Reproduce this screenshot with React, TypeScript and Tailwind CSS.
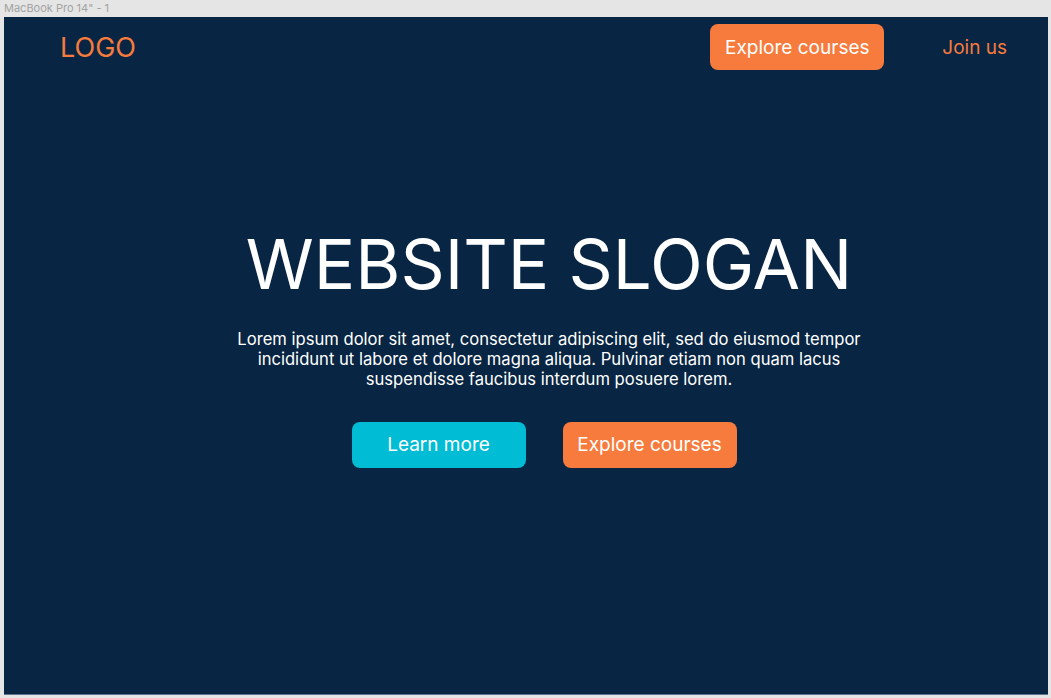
export default function App() {
  return (
    <div className="w-[1051px] h-[698px] bg-[#e5e5e5] overflow-hidden" style={{ fontFamily: 'Inter, "Noto Sans", sans-serif' }}>
      <div className="h-[17px] pl-[4px] text-[11px] leading-[17px] text-[#a3a3a3]">MacBook Pro 14&quot; - 1</div>
      <div className="ml-[4px] w-[1044px] h-[678px] bg-[#082543] border-b border-[#5b7590] flex flex-col">
        <header className="flex items-center pt-[7px] pl-[56px] pr-[41px]">
          <div className="text-[27px] text-[#f67b3c] leading-none">LOGO</div>
          <div className="ml-auto flex items-center gap-[58px]">
            <button className="w-[174px] h-[46px] rounded-[8px] bg-[#f67b3c] text-white text-[19px] leading-[48px]">Explore courses</button>
            <a className="text-[19px] text-[#f67b3c] pt-[2px]">Join us</a>
          </div>
        </header>
        <main className="flex flex-col items-center pl-[46px] pt-[160px]">
          <h1 className="text-[69px] leading-none text-white font-normal">WEBSITE SLOGAN</h1>
          <p className="mt-[30px] w-[660px] text-center text-[16.6px] leading-[20px] text-white">
            Lorem ipsum dolor sit amet, consectetur adipiscing elit, sed do eiusmod tempor incididunt ut labore et dolore magna aliqua. Pulvinar etiam non quam lacus suspendisse faucibus interdum posuere lorem.
          </p>
          <div className="mt-[33px] mr-[10px] flex gap-[37px]">
            <button className="w-[174px] h-[46px] rounded-[8px] bg-[#00bcd4] text-white text-[19px]">Learn more</button>
            <button className="w-[174px] h-[46px] rounded-[8px] bg-[#f67b3c] text-white text-[19px]">Explore courses</button>
          </div>
        </main>
      </div>
    </div>
  );
}
